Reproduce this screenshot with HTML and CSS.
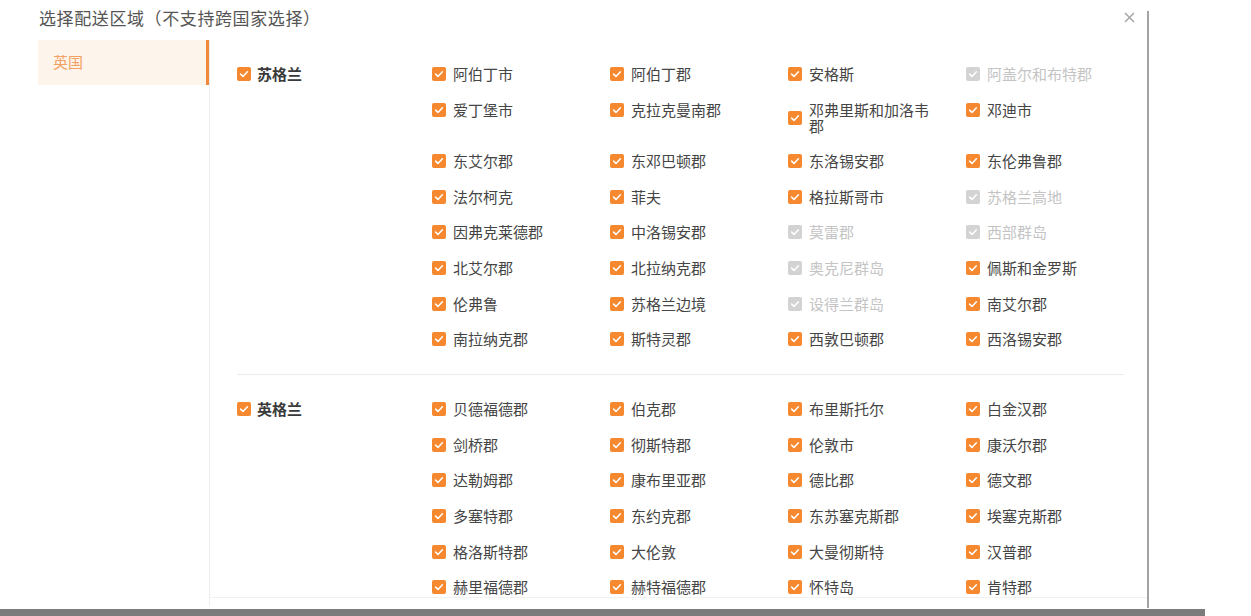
FILE: index.html
```html
<!DOCTYPE html>
<html lang="zh-CN">
<head>
<meta charset="utf-8">
<title>选择配送区域</title>
<link rel="stylesheet" href="styles.css">
</head>
<body>
<div class="screen">
  <div class="frame">
    <div class="dialog">
      <div class="header">
        <div class="title">选择配送区域（不支持跨国家选择）</div>
        <div class="close"><svg width="11" height="11" viewBox="0 0 11 11"><path d="M1 1L10 10M10 1L1 10" stroke="#a6a6a6" stroke-width="1.5" fill="none"/></svg></div>
      </div>
      <div class="body">
        <div class="sidebar">
          <div class="country active">英国</div>
        </div>
        <div class="content">
          <div class="group">
            <div class="province"><span class="cb"></span><span class="plabel">苏格兰</span></div>
            <div class="items">
              <div class="item"><span class="cb"></span><span class="label">阿伯丁市</span></div>
              <div class="item"><span class="cb"></span><span class="label">阿伯丁郡</span></div>
              <div class="item"><span class="cb"></span><span class="label">安格斯</span></div>
              <div class="item disabled"><span class="cb"></span><span class="label">阿盖尔和布特郡</span></div>
              <div class="item"><span class="cb"></span><span class="label">爱丁堡市</span></div>
              <div class="item"><span class="cb"></span><span class="label">克拉克曼南郡</span></div>
              <div class="item"><span class="cb"></span><span class="label">邓弗里斯和加洛韦郡</span></div>
              <div class="item"><span class="cb"></span><span class="label">邓迪市</span></div>
              <div class="item"><span class="cb"></span><span class="label">东艾尔郡</span></div>
              <div class="item"><span class="cb"></span><span class="label">东邓巴顿郡</span></div>
              <div class="item"><span class="cb"></span><span class="label">东洛锡安郡</span></div>
              <div class="item"><span class="cb"></span><span class="label">东伦弗鲁郡</span></div>
              <div class="item"><span class="cb"></span><span class="label">法尔柯克</span></div>
              <div class="item"><span class="cb"></span><span class="label">菲夫</span></div>
              <div class="item"><span class="cb"></span><span class="label">格拉斯哥市</span></div>
              <div class="item disabled"><span class="cb"></span><span class="label">苏格兰高地</span></div>
              <div class="item"><span class="cb"></span><span class="label">因弗克莱德郡</span></div>
              <div class="item"><span class="cb"></span><span class="label">中洛锡安郡</span></div>
              <div class="item disabled"><span class="cb"></span><span class="label">莫雷郡</span></div>
              <div class="item disabled"><span class="cb"></span><span class="label">西部群岛</span></div>
              <div class="item"><span class="cb"></span><span class="label">北艾尔郡</span></div>
              <div class="item"><span class="cb"></span><span class="label">北拉纳克郡</span></div>
              <div class="item disabled"><span class="cb"></span><span class="label">奥克尼群岛</span></div>
              <div class="item"><span class="cb"></span><span class="label">佩斯和金罗斯</span></div>
              <div class="item"><span class="cb"></span><span class="label">伦弗鲁</span></div>
              <div class="item"><span class="cb"></span><span class="label">苏格兰边境</span></div>
              <div class="item disabled"><span class="cb"></span><span class="label">设得兰群岛</span></div>
              <div class="item"><span class="cb"></span><span class="label">南艾尔郡</span></div>
              <div class="item"><span class="cb"></span><span class="label">南拉纳克郡</span></div>
              <div class="item"><span class="cb"></span><span class="label">斯特灵郡</span></div>
              <div class="item"><span class="cb"></span><span class="label">西敦巴顿郡</span></div>
              <div class="item"><span class="cb"></span><span class="label">西洛锡安郡</span></div>
            </div>
          </div>
          <div class="group">
            <div class="province"><span class="cb"></span><span class="plabel">英格兰</span></div>
            <div class="items">
              <div class="item"><span class="cb"></span><span class="label">贝德福德郡</span></div>
              <div class="item"><span class="cb"></span><span class="label">伯克郡</span></div>
              <div class="item"><span class="cb"></span><span class="label">布里斯托尔</span></div>
              <div class="item"><span class="cb"></span><span class="label">白金汉郡</span></div>
              <div class="item"><span class="cb"></span><span class="label">剑桥郡</span></div>
              <div class="item"><span class="cb"></span><span class="label">彻斯特郡</span></div>
              <div class="item"><span class="cb"></span><span class="label">伦敦市</span></div>
              <div class="item"><span class="cb"></span><span class="label">康沃尔郡</span></div>
              <div class="item"><span class="cb"></span><span class="label">达勒姆郡</span></div>
              <div class="item"><span class="cb"></span><span class="label">康布里亚郡</span></div>
              <div class="item"><span class="cb"></span><span class="label">德比郡</span></div>
              <div class="item"><span class="cb"></span><span class="label">德文郡</span></div>
              <div class="item"><span class="cb"></span><span class="label">多塞特郡</span></div>
              <div class="item"><span class="cb"></span><span class="label">东约克郡</span></div>
              <div class="item"><span class="cb"></span><span class="label">东苏塞克斯郡</span></div>
              <div class="item"><span class="cb"></span><span class="label">埃塞克斯郡</span></div>
              <div class="item"><span class="cb"></span><span class="label">格洛斯特郡</span></div>
              <div class="item"><span class="cb"></span><span class="label">大伦敦</span></div>
              <div class="item"><span class="cb"></span><span class="label">大曼彻斯特</span></div>
              <div class="item"><span class="cb"></span><span class="label">汉普郡</span></div>
              <div class="item"><span class="cb"></span><span class="label">赫里福德郡</span></div>
              <div class="item"><span class="cb"></span><span class="label">赫特福德郡</span></div>
              <div class="item"><span class="cb"></span><span class="label">怀特岛</span></div>
              <div class="item"><span class="cb"></span><span class="label">肯特郡</span></div>
            </div>
          </div>
        </div>
      </div>
    </div>
    <div class="edge"></div>
  </div>
  <div class="hbar"></div>
</div>
</body>
</html>
```

FILE: styles.css
```css
* { box-sizing: border-box; }
html, body {
  margin: 0;
  padding: 0;
  background: #ffffff;
  width: 1251px;
  height: 616px;
  overflow: hidden;
  font-family: "Noto Sans CJK SC", "Noto Sans", sans-serif;
}
.screen {
  width: 1251px;
  height: 616px;
  display: flex;
  flex-direction: column;
}
.frame {
  display: flex;
  height: 609px;
}
.dialog {
  width: 1147px;
  height: 609px;
  display: flex;
  flex-direction: column;
}
.edge {
  width: 2px;
  margin-top: 11px;
  height: 597px;
  background: #a3a3a3;
}
.hbar {
  width: 1205px;
  height: 7px;
  background: #7c7c7c;
}
.header {
  height: 40px;
  padding: 0 12px 6px 39px;
  display: flex;
  align-items: center;
  justify-content: space-between;
}
.title {
  font-size: 17px;
  color: #555555;
  letter-spacing: 0.6px;
}
.close {
  width: 11px;
  height: 11px;
  display: flex;
}
.body {
  display: flex;
  height: 566px;
}
.sidebar {
  flex: none;
  margin-left: 38px;
  width: 172px;
  border-right: 1px solid #ededed;
}
.country {
  height: 45px;
  line-height: 44px;
  padding-left: 15px;
  font-size: 15px;
  color: #333;
}
.country.active {
  background: #fdf4eb;
  color: #f4a163;
  border-right: 3px solid #f0893c;
}
.content {
  flex: 1;
  height: 558px;
  overflow: hidden;
  border-bottom: 1px solid #f1f1f1;
}
.group {
  margin: 0 23px 0 27px;
  padding: 26px 0 27px;
  border-bottom: 1px solid #ececec;
  display: flex;
  align-items: flex-start;
}
.province {
  flex: none;
  width: 195px;
  display: flex;
  align-items: center;
  line-height: 16px;
}
.plabel {
  font-size: 15px;
  font-weight: bold;
  color: #3a3a3a;
}
.items {
  flex: 1;
  display: grid;
  grid-template-columns: repeat(3, 178px) 1fr;
  row-gap: 19.6px;
  align-items: start;
}
.item {
  display: flex;
  align-items: center;
  line-height: 16px;
}
.label {
  font-size: 15px;
  color: #454545;
  max-width: 128px;
}
.cb {
  flex: none;
  width: 14px;
  height: 14px;
  border-radius: 2px;
  margin-right: 7px;
  background-color: #f6892f;
  background-image: url("data:image/svg+xml,%3Csvg xmlns='http://www.w3.org/2000/svg' width='14' height='14' viewBox='0 0 14 14'%3E%3Cpath d='M3.6 7.1L6 9.4L10.4 4.7' stroke='%23ffffff' stroke-width='1.5' fill='none' stroke-linecap='round' stroke-linejoin='round'/%3E%3C/svg%3E");
  background-repeat: no-repeat;
  background-position: center;
}
.province .cb { margin-right: 6px; }
.item.disabled .cb { background-color: #d3d3d3; }
.item.disabled .label { color: #c4c4c4; }
```
